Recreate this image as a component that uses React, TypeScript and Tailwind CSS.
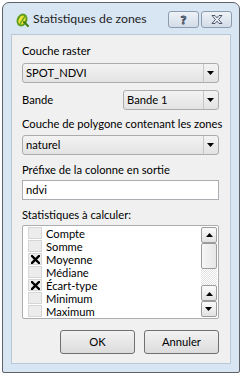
import { ReactNode } from "react";

const stats = [
  { name: "Compte", checked: false },
  { name: "Somme", checked: false },
  { name: "Moyenne", checked: true },
  { name: "Médiane", checked: false },
  { name: "Écart-type", checked: true },
  { name: "Minimum", checked: false },
  { name: "Maximum", checked: false },
];

const Arrow = ({ up = false }: { up?: boolean }) => (
  <svg width="8" height="5" viewBox="0 0 8 5" className={up ? "rotate-180" : ""}>
    <path d="M0 0 H7 L3.5 4 Z" fill="#000" />
  </svg>
);

const Combo = ({ value, className = "" }: { value: string; className?: string }) => (
  <div
    className={
      "h-[20px] flex items-stretch rounded-[3px] border border-[#acacac] bg-gradient-to-b from-[#f3f3f3] to-[#e3e3e3] " +
      className
    }
  >
    <div className="flex-1 flex items-center pl-[3px] leading-none">{value}</div>
    <div className="w-[15px] border-l border-[#c6c6c6] flex items-center justify-center">
      <Arrow />
    </div>
  </div>
);

const Label = ({ children, className = "" }: { children: ReactNode; className?: string }) => (
  <div className={"h-[16px] leading-[16px] whitespace-nowrap " + className}>{children}</div>
);

const ScrollBtn = ({ up = false }: { up?: boolean }) => (
  <div className="h-[16px] rounded-[2px] border border-[#9c9c9c] bg-gradient-to-b from-[#fbfbfb] to-[#e2e2e2] flex items-center justify-center">
    <Arrow up={up} />
  </div>
);

const TitleIcon = () => (
  <svg width="13" height="14" viewBox="0 0 13 14">
    <ellipse cx="6" cy="7" rx="4.2" ry="5.6" transform="rotate(25 6 7)" fill="#f3e23a" stroke="#5d9d1c" strokeWidth="2" />
    <path d="M8 9 L12 13" stroke="#3f7d12" strokeWidth="2" strokeLinecap="round" />
    <path d="M4 11 L9 3" stroke="#6aa822" strokeWidth="1.5" />
  </svg>
);

export default function App() {
  return (
    <div className="w-[242px] h-[375px] bg-white pt-[2px] pl-[2px] text-[11.2px] text-black [font-family:Lato,'Liberation_Sans',sans-serif]">
      <div className="w-[238px] h-[371px] border border-[#5e6166] rounded-t-[7px] rounded-b-[2px] bg-[#d8e5f3] flex flex-col px-[8px] pb-[8px]">
        {/* title bar */}
        <div className="h-[31px] flex items-center shrink-0">
          <div className="ml-[5px] mt-[3px]">
            <TitleIcon />
          </div>
          <div className="ml-[4px] mt-[2px] text-[12.3px] text-[#1e1e1e]">Statistiques de zones</div>
          <div className="ml-auto mr-[-1px] mt-[2px] flex gap-[2px]">
            <div className="w-[31px] h-[17px] rounded-[3px] border border-[#8c9cb0] bg-gradient-to-b from-[#eef2f7] to-[#d3dce8] flex items-center justify-center text-[12px] font-bold text-[#e8edf3] [-webkit-text-stroke:1px_#3c4a5c]">
              ?
            </div>
            <div className="w-[31px] h-[17px] rounded-[3px] border border-[#8c9cb0] bg-gradient-to-b from-[#eef2f7] to-[#d3dce8] flex items-center justify-center">
              <svg width="12" height="9" viewBox="0 0 12 9">
                <path
                  d="M1 0.5 H4 L6 2.8 L8 0.5 H11 L7.6 4.5 L11 8.5 H8 L6 6.2 L4 8.5 H1 L4.4 4.5 Z"
                  fill="#e9eef4"
                  stroke="#3c4a5c"
                  strokeWidth="0.9"
                  strokeLinejoin="round"
                />
              </svg>
            </div>
          </div>
        </div>

        {/* content */}
        <div className="flex-1 bg-[#f0f0f0] border border-[#b8c8d9] pl-[10px] pr-[11px] pt-[8px] flex flex-col">
          <Label>Couche raster</Label>
          <Combo value="SPOT_NDVI" className="mt-[4px]" />

          <div className="mt-[7px] flex items-center">
            <div className="flex-1">Bande</div>
            <Combo value="Bande 1" className="w-[96px]" />
          </div>

          <Label className="mt-[6px]">Couche de polygone contenant les zones</Label>
          <Combo value="naturel" className="mt-[3px]" />

          <Label className="mt-[7px]">Préfixe de la colonne en sortie</Label>
          <div className="mt-[2px] h-[20px] border border-[#abadb3] bg-white flex items-center pl-[3px] leading-none">
            ndvi
          </div>

          <Label className="mt-[7px]">Statistiques à calculer:</Label>
          <div className="mt-[2px] h-[94px] rounded-[2px] border border-[#abadb3] bg-white flex p-[1px]">
            <div className="flex-1 flex flex-col pl-[4px]">
              {stats.map((s) => (
                <div key={s.name} className="h-[13px] flex items-center shrink-0">
                  <div className="w-[14px] h-[12px] mb-[1px] bg-[#ececec] border border-[#d6d6d6] flex items-center justify-center">
                    {s.checked && (
                      <svg width="9" height="9" viewBox="0 0 9 9">
                        <path d="M1 1 L8 8 M8 1 L1 8" stroke="#000" strokeWidth="2.4" strokeLinecap="square" />
                      </svg>
                    )}
                  </div>
                  <div className="ml-[4px] leading-[13px]">{s.name}</div>
                </div>
              ))}
            </div>
            <div className="w-[16px] flex flex-col">
              <ScrollBtn up />
              <div className="h-[26px] rounded-[2px] border border-[#9c9c9c] bg-gradient-to-r from-[#f6f6f6] to-[#e6e6e6]" />
              <div className="h-[17px] bg-[repeating-conic-gradient(#e2e2e2_0_25%,#ffffff_0_50%)] bg-[length:2px_2px]" />
              <ScrollBtn up />
              <ScrollBtn />
            </div>
          </div>

          <div className="mt-[11px] flex justify-end gap-[9px]">
            <div className="w-[75px] h-[24px] rounded-[3px] border border-[#707070] bg-gradient-to-b from-[#f2f2f2] to-[#dcdcdc] flex items-center justify-center">
              OK
            </div>
            <div className="w-[75px] h-[24px] rounded-[3px] border border-[#707070] bg-gradient-to-b from-[#f2f2f2] to-[#dcdcdc] flex items-center justify-center">
              Annuler
            </div>
          </div>
        </div>
      </div>
    </div>
  );
}
